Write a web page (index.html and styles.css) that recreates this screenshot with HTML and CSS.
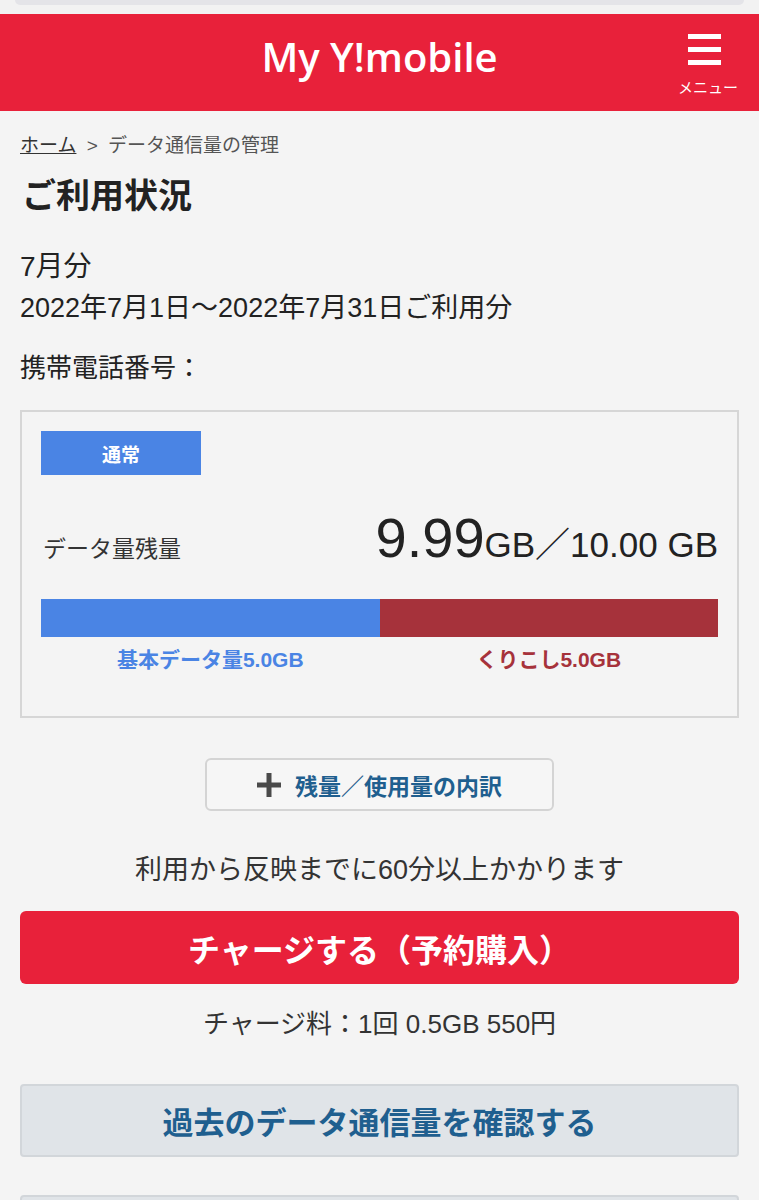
FILE: index.html
```html
<!DOCTYPE html>
<html lang="ja">
<head>
    <meta charset="UTF-8">
    <meta name="viewport" content="width=device-width, initial-scale=1.0">
    <title>ご利用状況 | My Y!mobile</title>
    <link rel="stylesheet" href="styles.css">
</head>
<body>

    <div class="topbar"><div class="topbar-pill"></div></div>

    <header class="site-header">
        <div class="logo">My Y!mobile</div>
        <button class="menu-button" aria-label="メニュー">
            <span class="menu-icon">
                <span></span><span></span><span></span>
            </span>
            <span class="menu-label">メニュー</span>
        </button>
    </header>

    <main class="content">
        <nav class="breadcrumb">
            <a href="#">ホーム</a>
            <span class="sep">&gt;</span>
            <span>データ通信量の管理</span>
        </nav>

        <h1 class="page-title">ご利用状況</h1>

        <p class="month">7月分</p>
        <p class="period">2022年7月1日〜2022年7月31日ご利用分</p>
        <p class="phone">携帯電話番号：</p>

        <section class="usage-card">
            <div class="plan-badge">通常</div>

            <div class="remain-row">
                <span class="remain-label">データ量残量</span>
                <span class="remain-value"><span class="big">9.99</span>GB／10.00 GB</span>
            </div>

            <div class="usage-bar">
                <div class="bar-basic"></div>
                <div class="bar-carry"></div>
            </div>
            <div class="bar-legend">
                <span class="legend-basic">基本データ量5.0GB</span>
                <span class="legend-carry">くりこし5.0GB</span>
            </div>
        </section>

        <div class="detail-wrap">
            <button class="detail-button">
                <svg class="plus" width="24" height="24" viewBox="0 0 24 24"><path d="M9.5 0h5v9.5H24v5h-9.5V24h-5v-9.5H0v-5h9.5z" fill="#4a4a4a"/></svg>
                残量／使用量の内訳
            </button>
        </div>

        <p class="note">利用から反映までに60分以上かかります</p>

        <button class="charge-button">チャージする（予約購入）</button>
        <p class="charge-fee">チャージ料：1回 0.5GB 550円</p>

        <button class="history-button">過去のデータ通信量を確認する</button>
        <div class="next-block"></div>
    </main>

</body>
</html>
```

FILE: styles.css
```css
body {
    margin: 0;
    background-color: #f4f4f4;
    font-family: "Liberation Sans", "Noto Sans CJK JP", sans-serif;
    color: #222;
}

.topbar {
    height: 14px;
    padding: 0 15px;
    background-color: #f2f2f2;
}

.topbar-pill {
    height: 5px;
    background-color: #e4e4e8;
    border-radius: 0 0 8px 8px;
}

.site-header {
    position: relative;
    height: 97px;
    background-color: #e8213a;
    display: flex;
    align-items: center;
    justify-content: center;
}

.logo {
    color: #fff;
    font-family: "Open Sans", sans-serif;
    font-weight: 600;
    font-size: 40px;
    letter-spacing: 0;
    margin-bottom: 12px;
}

.menu-button {
    position: absolute;
    right: 21px;
    top: 20px;
    background: none;
    border: none;
    padding: 0;
    display: flex;
    flex-direction: column;
    align-items: center;
    cursor: pointer;
}

.menu-icon {
    display: flex;
    flex-direction: column;
    gap: 8px;
    width: 33px;
    margin-right: 6px;
}

.menu-icon span {
    display: block;
    height: 5px;
    background-color: #fff;
}

.menu-label {
    margin-top: 12px;
    color: #fff;
    font-family: "Noto Sans CJK JP", sans-serif;
    font-size: 15px;
    line-height: 20px;
}

.content {
    padding: 21px 20px 0;
}

.breadcrumb {
    font-size: 19px;
    color: #555;
    line-height: 28px;
}

.breadcrumb a {
    color: #333;
    text-decoration: underline;
}

.breadcrumb .sep {
    margin: 0 5px;
}

.page-title {
    margin: 13px 0 0 2px;
    font-size: 34px;
    font-weight: bold;
    color: #222;
    line-height: 46px;
}

.month {
    margin: 29px 0 0;
    font-size: 28px;
    line-height: 38px;
}

.period {
    margin: 3px 0 0;
    font-size: 27px;
    line-height: 38px;
}

.phone {
    margin: 22px 0 0;
    font-size: 26px;
    line-height: 38px;
}

.usage-card {
    margin-top: 23px;
    border: 2px solid #d6d6d6;
    padding: 19px 19px 42px;
}

.plan-badge {
    width: 160px;
    height: 44px;
    background-color: #4a84e4;
    color: #fff;
    font-weight: bold;
    font-size: 19px;
    display: flex;
    align-items: center;
    justify-content: center;
}

.remain-row {
    margin-top: 30px;
    display: flex;
    justify-content: space-between;
    align-items: baseline;
}

.remain-label {
    font-size: 23px;
    color: #333;
    margin-left: 2px;
}

.remain-value {
    font-size: 35px;
    color: #222;
}

.remain-value .big {
    font-size: 56px;
}

.usage-bar {
    margin-top: 29px;
    height: 38px;
    display: flex;
}

.bar-basic {
    flex: 1;
    background-color: #4a84e4;
}

.bar-carry {
    flex: 1;
    background-color: #a6323b;
}

.bar-legend {
    display: flex;
    margin-top: 9px;
    font-size: 21px;
    font-weight: bold;
    line-height: 28px;
}

.bar-legend span {
    flex: 1;
    text-align: center;
}

.legend-basic {
    color: #4a84e4;
}

.legend-carry {
    color: #a6323b;
}

.detail-wrap {
    margin-top: 40px;
    display: flex;
    justify-content: center;
}

.detail-button {
    width: 349px;
    height: 53px;
    border: 2px solid #d4d4d4;
    border-radius: 6px;
    background-color: #f6f6f6;
    color: #1f5f8f;
    font-family: inherit;
    font-size: 23px;
    font-weight: bold;
    display: flex;
    align-items: center;
    justify-content: center;
    gap: 14px;
    cursor: pointer;
}

.plus {
    width: 24px;
    height: 24px;
}

.note {
    margin: 40px 0 0;
    text-align: center;
    font-size: 27px;
    color: #333;
    line-height: 38px;
}

.charge-button {
    display: block;
    width: 100%;
    margin-top: 22px;
    height: 73px;
    border: none;
    border-radius: 6px;
    background-color: #e8213a;
    color: #fff;
    font-family: inherit;
    font-size: 32px;
    font-weight: bold;
    cursor: pointer;
}

.charge-fee {
    margin: 22px 0 0;
    text-align: center;
    font-size: 26px;
    color: #333;
    line-height: 36px;
}

.history-button {
    display: block;
    width: 100%;
    margin-top: 42px;
    height: 73px;
    border: 2px solid #d2d6da;
    border-radius: 4px;
    background-color: #e0e4e8;
    color: #1f5f8f;
    font-family: inherit;
    font-size: 31px;
    font-weight: bold;
    cursor: pointer;
}

.next-block {
    margin-top: 38px;
    height: 40px;
    border: 2px solid #d2d6da;
    border-radius: 4px;
    background-color: #e0e4e8;
}
```
